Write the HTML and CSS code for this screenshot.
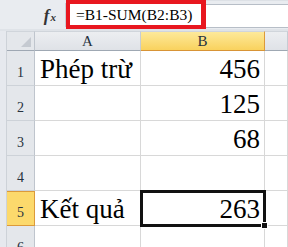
FILE: index.html
```html
<!DOCTYPE html>
<html lang="vi">
<head>
    <meta charset="UTF-8">
    <title>Phép trừ</title>
    <link rel="stylesheet" href="styles.css">
</head>
<body>

    <!-- Formula bar -->
    <div class="formula-bar">
        <div class="fx-box"><span class="fx"><i>f</i><small>x</small></span></div>
        <div class="formula">=B1-SUM(B2:B3)</div>
        <div class="formula-rest"><div class="formula-input"></div></div>
    </div>
    <div class="band"></div>

    <!-- Sheet -->
    <div class="sheet">
        <div class="strip"></div>
        <div class="grid">
            <div class="corner"><span class="tri"></span></div>
            <div class="col-head">A</div>
            <div class="col-head active">B</div>
            <div class="col-head"></div>

            <div class="row-head">1</div>
            <div class="cell">Phép trừ</div>
            <div class="cell num">456</div>
            <div class="cell"></div>

            <div class="row-head">2</div>
            <div class="cell"></div>
            <div class="cell num">125</div>
            <div class="cell"></div>

            <div class="row-head">3</div>
            <div class="cell"></div>
            <div class="cell num">68</div>
            <div class="cell"></div>

            <div class="row-head">4</div>
            <div class="cell"></div>
            <div class="cell"></div>
            <div class="cell"></div>

            <div class="row-head active">5</div>
            <div class="cell">Kết quả</div>
            <div class="cell num selected">263</div>
            <div class="cell"></div>

            <div class="row-head">6</div>
            <div class="cell"></div>
            <div class="cell"></div>
            <div class="cell"></div>
        </div>
    </div>

</body>
</html>
```

FILE: styles.css
```css
/* Base */
body {
    margin: 0;
    width: 288px;
    height: 247px;
    overflow: hidden;
    background: #ffffff;
    font-family: "Liberation Serif", "Times New Roman", serif;
}

/* Formula bar */
.formula-bar {
    display: flex;
    height: 29px;
    background: #e9ecf0;
}

.fx-box {
    width: 66px;
    display: flex;
    justify-content: flex-end;
    align-items: center;
    padding-right: 9px;
    box-sizing: border-box;
    border-right: 1px solid #c9ced5;
    margin-top: 3px;
    height: 24px;
}

.fx {
    color: #333333;
    font-size: 17px;
    font-weight: bold;
    line-height: 1;
}
.fx small {
    font-size: 11px;
    font-style: italic;
    margin-left: 1px;
}

.formula {
    width: 140px;
    box-sizing: border-box;
    border: 4px solid #e8171f;
    border-right-width: 5px;
    background: #ffffff;
    color: #000000;
    font-size: 15.5px;
    line-height: 21px;
    padding-left: 6px;
    white-space: nowrap;
}

.formula-rest {
    flex: 1;
    padding-top: 3px;
    border-top: 1px solid #dde1e6;
    box-sizing: border-box;
}

.formula-input {
    height: 22px;
    background: #ffffff;
    border-top: 1px solid #b7bec7;
    border-bottom: 1px solid #b7bec7;
}

.band {
    height: 2px;
    background: #dfe3e8;
}

/* Sheet */
.sheet {
    display: flex;
}

.strip {
    width: 6px;
    background: #e6e9ee;
    border-right: 1px solid #cdd2d8;
}

.grid {
    flex: 1;
    display: grid;
    grid-template-columns: 28px 106px 124px 1fr;
    grid-template-rows: 20px repeat(6, 35px);
}

.grid > div {
    box-sizing: border-box;
}

.corner {
    position: relative;
    background: #e4e7eb;
    border-right: 1px solid #bfc5cd;
    border-bottom: 1px solid #9fa8b3;
    border-top: 1px solid #d0d5db;
}
.tri {
    position: absolute;
    right: 3px;
    bottom: 3px;
    width: 0;
    height: 0;
    border-left: 10px solid transparent;
    border-bottom: 10px solid #c5cad1;
}

.col-head {
    background: linear-gradient(#eceef1, #dfe2e7);
    border-right: 1px solid #c6ccd3;
    border-bottom: 1px solid #9fa8b3;
    border-top: 1px solid #d0d5db;
    color: #27323e;
    font-size: 15px;
    text-align: center;
    line-height: 18px;
}
.col-head.active {
    background: linear-gradient(#fde99a, #f9d25e);
    border-right-color: #dc9a3a;
    border-bottom-color: #d89436;
}

.row-head {
    display: flex;
    justify-content: center;
    align-items: flex-end;
    padding-bottom: 5px;
    background: #e4e7eb;
    border-right: 1px solid #bfc5cd;
    border-bottom: 1px solid #cdd2d8;
    color: #27323e;
    font-size: 14px;
    line-height: 14px;
}
.row-head.active {
    background: #fcd96c;
    border-right-color: #dc9a3a;
    border-bottom-color: #dc9a3a;
    border-top: 1px solid #dc9a3a;
}

.cell {
    display: flex;
    align-items: flex-end;
    padding: 0 4px 2px 5px;
    border-right: 1px solid #d8d8d8;
    border-bottom: 1px solid #d8d8d8;
    font-size: 27px;
    line-height: 27px;
    color: #000000;
    white-space: nowrap;
}
.cell.num {
    justify-content: flex-end;
}

/* Active cell */
.cell.selected {
    position: relative;
    outline: 3px solid #111111;
    outline-offset: -2px;
}
.cell.selected::after {
    content: "";
    position: absolute;
    right: -4px;
    bottom: -4px;
    width: 5px;
    height: 5px;
    background: #111111;
    border: 1px solid #ffffff;
}
```
